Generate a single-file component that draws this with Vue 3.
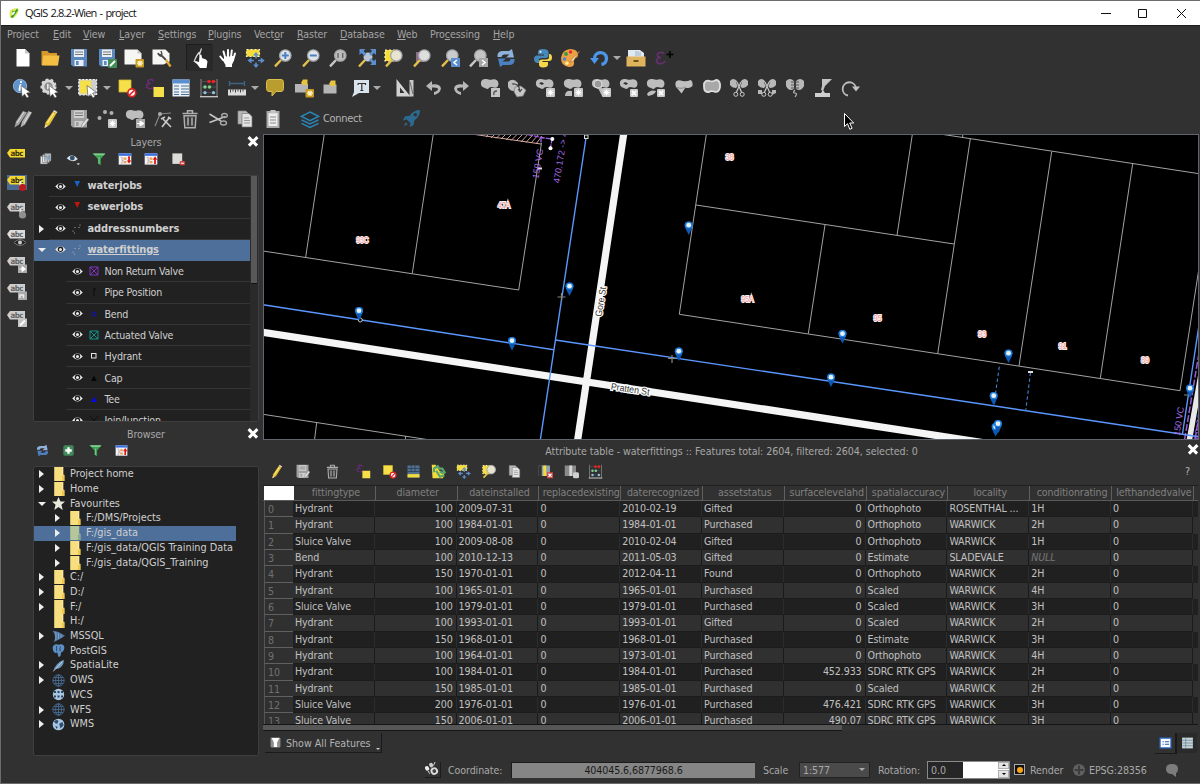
<script setup>
const menus = [
  ['Pro', 'j', 'ect', 46], ['', 'E', 'dit', 30], ['', 'V', 'iew', 36], ['', 'L', 'ayer', 39],
  ['', 'S', 'ettings', 50], ['', 'P', 'lugins', 46], ['Vect', 'o', 'r', 43], ['', 'R', 'aster', 43],
  ['', 'D', 'atabase', 57], ['', 'W', 'eb', 33], ['Pro', 'c', 'essing', 63], ['', 'H', 'elp', 30]
]

const blob = '<path d="M1 4Q2 .5 6.500 1Q10 2.500 13 1.200Q18.500 1 18.500 6Q18 10.500 14 9.500Q11 8.500 9.500 9.500Q8 12 5 10Q0 9 1 4Z" fill="#bdbdbd"/>'
const star = '<rect x="11" y="10" width="9" height="9" rx="1" fill="#c9c9c9"/><path d="M15.500 11.500v6M12.500 14.500h6M13.400 12.400l4.200 4.200M17.600 12.400l-4.200 4.200" stroke="#fff" stroke-width="1.100"/>'
const goldStar = '<rect x="11.500" y="11" width="8.500" height="8.500" rx="1" fill="#c99b22"/><path d="M16 12.500v5.500M13 15.200h6M13.800 13.200l4.200 4.200M18 13.200l-4.200 4.200" stroke="#fff3c0" stroke-width="1.200"/>'
const cross = '<rect x="11" y="11" width="8" height="8" rx="1" fill="#c9c9c9"/><path d="M12.800 12.800l4.400 4.400M17.200 12.800l-4.400 4.400" stroke="#fff" stroke-width="1.700"/>'
const arrowCur = '<path d="M9 7.500l9.500 7-3.900.6 2.300 3.700-2 1.200-2.300-3.800-2.600 2.500Z" fill="#fff" stroke="#444" stroke-width=".6"/>'
const lens = (fill, handle) => `<path d="M8 12L2 18.300" stroke="${handle}" stroke-width="2.400"/><circle cx="12.300" cy="7.500" r="5.700" fill="${fill}" stroke="#a4a7aa" stroke-width="1.300"/>`
const deny = '<circle cx="14.800" cy="14.800" r="3.900" fill="#fff" stroke="#d22" stroke-width="1.700"/><path d="M12.200 17.400l5.200-5.200" stroke="#d22" stroke-width="1.600"/>'
const floppy = (c, l) => `<path d="M2 1h16v17.500H4l-2-2Z" fill="${c}"/><path d="M5 1.500h10v7.500H5Z" fill="${l}"/><path d="M6 4h8M6 6.500h8" stroke="#777" stroke-width="1"/><path d="M5.500 12h9v6h-9Z" fill="${l}"/><path d="M7 13h2.600v4H7Z" fill="${c}"/>`
const fourWay = '<path d="M11 7v11M5.500 12.500h11" stroke="#5b8fcf" stroke-width="1.600" stroke-dasharray="3.500 4"/><path d="M11 4l3 3.500H8ZM11 20l-3-3.500h6ZM2.500 12.500l4-3v6ZM19.700 12.500l-4-3v6Z" fill="#5b8fcf"/>'
const dots = '<path d="M2 1v18M18 1v18" stroke="#888" stroke-width="1"/><path d="M1 18.700h18" stroke="#ccc" stroke-width="1.300"/><path d="M2 3.500h16M2 9h16M2 14.500h16" stroke="#555" stroke-width=".8"/><path d="M10 3.500h.01M14.500 3.500h.01" stroke="#e22" stroke-width="3.600" stroke-linecap="round"/><path d="M6 9h.01M10.500 9h.01" stroke="#7fd08a" stroke-width="3.400" stroke-linecap="round"/><path d="M6 14.700h.01M14.500 14.700h.01" stroke="#8cc3e6" stroke-width="3.200" stroke-linecap="round"/>'
const epsilon = '<path d="M8.500 3.500Q8 1 5.500 1.500Q2.500 2 3 4Q3.300 5.500 6 5.500Q1.500 5.500 1.500 8Q2 11 6 10.600Q8.500 10.500 9.500 8.500" fill="none" stroke="#6b2a78" stroke-width="1.500"/>'
const refresh = '<path d="M1.500 9V7Q2 3 7 3h6l3-2 2 8.500h-8l3.500-3H8Q6 6.500 5.500 9Z" fill="#8fb2dc"/><path d="M18.500 11v2q-.5 4-5.500 4H7l-3 2-2-8.500h8l-3.500 3H12q2 0 2.500-2.500Z" fill="#4c80c0"/>'
const scissorBlob = '<path d="M1 3Q4-1 8 3L9 8 7 10Q3 10 1 7ZM19 3Q16-1 12 3L11 8 13 10Q17 10 19 7Z" fill="#b8b8b8"/><path d="M8 4l4.500 10M12 4L7.500 14" stroke="#444" stroke-width="2.200"/><path d="M8 4l4.500 10M12 4L7.500 14" stroke="#ccc" stroke-width="1.100"/><circle cx="6.800" cy="16.300" r="2" fill="none" stroke="#ccc"/><circle cx="13.200" cy="16.300" r="2" fill="none" stroke="#ccc"/>'
const tag = (c, t) => `<path d="M0 6l3-4h15v8.500H3Z" fill="${c}"/><text x="3.400" y="8.900" font-size="7.800" font-weight="bold" font-family="DejaVu Sans Condensed, DejaVu Sans, sans-serif" textLength="13" fill="${t}">abc</text>`
const treeIcon = d => `<rect x="1" y="2" width="18" height="16" fill="#f4f4f8"/><path d="M1 2h18v3.500H1Z" fill="#3a6fe0"/><path d="M4 8h2v8h-2M6 12h2" stroke="#999" fill="none"/><path d="M8 8h4v3H8ZM8 13h4v3H8Z" fill="#f09a4a"/><path d="${d}" fill="#e01010"/>`
const copyIcon = '<path d="M3 2h8l2 2v11H3Z" fill="#b8b8b8" stroke="#8a8a8a" stroke-width=".7"/><path d="M7 4.500h7l3 3v10.500H7Z" fill="#e4e4e4" stroke="#777" stroke-width=".7"/><path d="M9 9h5M9 11.500h6M9 14h6" stroke="#999"/>'
const trash = '<path d="M2.500 4.500h15M7.500 4V1.700h5v2.300" stroke="#b0b0b0" stroke-width="1.500" fill="none"/><path d="M4 6.700h12l-.8 12H4.800Z" fill="#3b3b3b" stroke="#b0b0b0" stroke-width="1.400"/><path d="M8 8.500v8M12 8.500v8" stroke="#b0b0b0" stroke-width="1.500"/>'

const icons = {
  logo: '<path d="M3 8Q6 1 17 2Q19 8 13 15L8 19Q1 18 3 8Z" fill="#dfe94a"/><path d="M4 17L15 3l2 2-9 13ZM7 6l6 2-5 5Z" fill="#2f9b3a"/><path d="M6 11l4-4 2 2-4 5Z" fill="#fff"/>',
  new: '<path d="M3.500 1h8.500l4.500 4.500v13h-13Z" fill="#fff"/><path d="M12 1v4.500h4.500Z" fill="#c8c8c8"/>',
  open: '<path d="M1.500 17V3h6l1.500 2h8v3h2l-2 9.500Z" fill="#d6982c"/><path d="M2 17.500L3.500 7.500h16l-1.500 10Z" fill="#f4c044"/>',
  save: floppy('#5c88c0', '#e9eef2'),
  saveas: floppy('#5c88c0', '#e9eef2') + '<rect x="11" y="11" width="9" height="9" rx="1" fill="#438d57"/><path d="M13 18l5-5" stroke="#fff" stroke-width="1.800"/>',
  composer: '<path d="M.5 1.500h13l4 4v11H.5Z" fill="#f6f6f4"/><path d="M13.500 1.500v4h4Z" fill="#c6c6c6"/>' + goldStar,
  manager: '<path d="M.5 1.500h13l4 4v8l-6 3H.5Z" fill="#f6f6f4"/><path d="M6 5q1 3 4 3l4 4" fill="none" stroke="#4a4a4a" stroke-width="1.800"/><path d="M9 3l1 3-3 1" fill="none" stroke="#4a4a4a" stroke-width="1.300"/><path d="M14 12l4.500 6.500" stroke="#dca83a" stroke-width="2.400"/>',
  touch: '<path d="M9.500 7q1.200-1 2 0l.5 3 4 1.500 1.500 2-1 6.500H10l-3-4-2.500-2 1-1 3.500 1Z" fill="#fff"/><path d="M11.500.5L9.300 7M9.500 4q-3 3-5.500 10" stroke="#dcdcdc" stroke-width="1.200" fill="none"/>',
  hand: '<path d="M5 12L2.300 8.500M7 9L5.500 3.500M10 9V2M13 9l.8-6.500M15.500 10.500l1.500-5" stroke="#fff" stroke-width="2" stroke-linecap="round"/><path d="M3.500 10l2.500 1V8h9.500l.8 4-2.300 4.500V19H7.500v-2Z" fill="#fff"/><path d="M8.500 4v5M11.600 4v5" stroke="#555" stroke-width=".6"/>',
  panto: '<path d="M1.500 1.500h13v7h-13Z" fill="#f5dd3b" stroke="#fff8b0" stroke-width="1.200" stroke-dasharray="2 2"/>' + fourWay,
  zoomin: lens('#dfe5ea', '#e4c14c') + '<path d="M12.300 4v7M8.800 7.500h7" stroke="#4a80c0" stroke-width="2"/>',
  zoomout: lens('#dfe5ea', '#e4c14c') + '<path d="M8.800 7.500h7" stroke="#4a80c0" stroke-width="2"/>',
  zoom1: lens('#bdbdbd', '#c8c8c8') + '<path d="M10 5v5M14.700 5v5M12.300 6v.1M12.300 9v.1" stroke="#666" stroke-width="1.400"/>',
  zoomfull: '<path d="M8 12L2 18.500" stroke="#e4c14c" stroke-width="2.400"/><circle cx="11" cy="9" r="4.500" fill="#bcc6d2"/><path d="M2.500 1h6l-2 2 3 3-2 2-3-3-2 2ZM19 1h-6l2 2-3 3 2 2 3-3 2 2ZM19 17h-6l2-2-3-3 2-2 3 3 2-2Z" fill="#5b8fcf"/>',
  zoomsel: '<path d="M1 2h9v11H1Z" fill="#f5dd3b" stroke="#fff8b0" stroke-width="1.200" stroke-dasharray="2 2"/>' + lens('#e8e4d0', '#e4c14c'),
  zoomlayer: '<path d="M4 4h8v10H4Z" fill="#8b6b85"/>' + lens('#dedede', '#e4c14c'),
  zoomlast: lens('#c9ccce', '#e4c14c') + '<path d="M11 10h9v9h-9Z" fill="#5b8fcf"/><path d="M17 12l-3 2.500 3 2.500" fill="none" stroke="#fff" stroke-width="1.600"/>',
  zoomnext: lens('#c4c4c4', '#c8c8c8') + '<path d="M11 10h9v9h-9Z" fill="#a6a6a6"/><path d="M14 12l3 2.500-3 2.500" fill="none" stroke="#fff" stroke-width="1.600"/>',
  refresh,
  python: '<path d="M10 1Q5 1 5 4v2.500h6v1H3.500Q1 8 1 11t3 4h2v-3q0-2 3-2h4q2.500 0 2.500-3V4Q15 1 10 1Z" fill="#4788bb"/><path d="M10 19.500q5 0 5-3V14H9.500v-1H16q3 0 3-3.500T16.500 6H16v3q0 2.500-3 2.500H9q-3 0-3 2.500v2.500q0 3 4 3Z" fill="#f6d54a"/><circle cx="7.500" cy="3.800" r="1" fill="#fff"/>',
  palette: '<path d="M10 1Q18 1 18 7q0 3-3 3-2 1-1 4 1 5-5 5Q1 18 1 10 2 2 10 1Z" fill="#eda043"/><circle cx="6" cy="6" r="2" fill="#3a9b43"/><circle cx="10.500" cy="4" r="1.800" fill="#e03030"/><circle cx="4.500" cy="11" r="1.800" fill="#4f86d0"/><circle cx="7" cy="15.200" r="1.700" fill="#fff0a0"/><path d="M19.500 3L12 11l-2 3 3.500-1Z" fill="#f6d9a0" stroke="#a36a20" stroke-width=".5"/>',
  undoBlue: '<path d="M5.500 11A6 6 0 1 1 12.500 16.500" fill="none" stroke="#4c96ea" stroke-width="3.400"/><path d="M1 10h9l-4.500 6Z" fill="#4c96ea"/>',
  archive: '<path d="M2 9V2h12l4 3v4Z" fill="#dfeaf0"/><path d="M10 3v5M12 3v5M14 4v4" stroke="#9db4c2"/><path d="M.5 8.500h19v10h-19Z" fill="#e0b45c"/><path d="M7.500 12h5v2h-5Z" fill="#6d5120"/>',
  epsPlus: '<path d="M10 6Q9 4 6.500 4.500Q3 5 3.500 7.500Q4 9.500 7 9.500Q2.500 9.500 2.500 13Q3 16 7 15.600Q10 15.500 11 13" fill="none" stroke="#63306c" stroke-width="1.800"/><path d="M16 3v7M12.500 6.500h7" stroke="#000" stroke-width="1.500"/>',
  identify: '<circle cx="8" cy="8" r="6.700" fill="#5f93cd" stroke="#9cc0e4" stroke-width=".8"/><path d="M8.500 7l-1 5M9 3.800v.3" stroke="#fff" stroke-width="2" stroke-linecap="round"/>' + arrowCur,
  gear: '<circle cx="8.500" cy="8.500" r="5.600" fill="#8e8e8e" stroke="#d9d9d9" stroke-width="2.600"/><circle cx="8.500" cy="8.500" r="7.300" fill="none" stroke="#d9d9d9" stroke-width="1.500" stroke-dasharray="2.800 2.400"/><path d="M7 5.500l5 3-5 3Z" fill="#e6e6e6"/>' + arrowCur,
  select: '<path d="M.7 1.500h18v15.500H.7Z" fill="#cfcfcf" stroke="#fff" stroke-dasharray="2 1.500"/><path d="M2 2.500h11v13H2Z" fill="#f5e04a"/>' + arrowCur,
  deselect: '<path d="M2 2h12v12H2Z" fill="#f5e04a" stroke="#d8b82c" stroke-width=".8"/>' + deny,
  selexpr: epsilon + '<path d="M8.500 9h10.500v10H8.500Z" fill="#f5e04a"/>',
  table: '<path d="M1.500 1.500h17v17h-17Z" fill="#e9f1f8"/><path d="M1.500 1.500h17v4h-17Z" fill="#5b8fcf"/><path d="M3 8h5M3 11h5M3 14h5M3 16.500h5M10 8h8M10 11h8M10 14h8M10 16.500h8" stroke="#51708f" stroke-width="1.200"/>',
  dots,
  measure: '<path d="M2 5.500h16M2.500 3v5M17.500 3v5" stroke="#3d6687" stroke-width="1.300"/><path d="M1 11.500h18v6H1Z" fill="#dcdcdc"/><path d="M3.500 11.500v3M6 11.500v2M8.500 11.500v3M11 11.500v2M13.500 11.500v3M16 11.500v2" stroke="#444"/>',
  tips: '<path d="M4 1.500h12q2.500 0 2.500 3v6q0 3-2.500 3h-5l-4 4.500v-4.500H4q-2.500 0-2.500-3v-6q0-3 2.500-3Z" fill="#b99d2e" stroke="#d9bf4c" stroke-width="1"/>',
  bookmarkNew: '<path d="M1 6h13v8.500H1Z" fill="#b5b5b5"/><path d="M9 1.500h4.500v5.500H9l-2-2Z" fill="#e8c53c"/>' + goldStar,
  bookmark: '<path d="M3.500 6.500h13v9h-13Z" fill="#b5b5b5"/><path d="M11 2.500h4.500v5.500H11l-2-2Z" fill="#e8c53c"/>',
  annot: '<path d="M4 2h15v13H9l-7 4 2-5Z" fill="#d9e4ec"/><path d="M8 5.500h7.500v1.500M11.800 5.500v7M10.300 12.500h3M8 5.500V7" stroke="#333" stroke-width="1.200" fill="none"/>',
  triangle: '<path d="M1.500 1l14 17.500h-14ZM5 9.500v5.500h4.500Z" fill="#d2d2d2" fill-rule="evenodd"/><path d="M14.500 2h4v16.500h-4" fill="#c8c8c8"/><path d="M15 4l3 12" stroke="#555" stroke-width=".8"/>',
  undo: '<path d="M8 3v3.500q8-1 9 4-1 5-7 6.500v-3q4-1 4-3 0-2-6-1.500V13L2 8Z" fill="#b8b8b8"/>',
  redo: '<path d="M12 3v3.500q-8-1-9 4 1 5 7 6.500v-3q-4-1-4-3 0-2 6-1.500V13l6-5Z" fill="#b8b8b8"/>',
  b1: blob + '<rect x="11" y="10" width="9" height="9" fill="#c4c4c4"/><path d="M14 17q-1-4 3-4" stroke="#555" fill="none" stroke-width="1.400"/>',
  b2: '<path d="M1 4q5-5 10 1l-1 7q-6 3-9-3Z" fill="#bdbdbd"/><path d="M8 9l6-1 5 4-3 6-6 1-3-5Z" fill="#c7c7c7" stroke="#777" stroke-width=".7"/><path d="M5 6q7-1 8 7M11 11l2 2.500 2-2.500" stroke="#444" fill="none" stroke-width="1.200"/>',
  b3: blob + '<path d="M3.500 5q4-3 6 1-3 3-6-1Z" fill="#333" stroke="#ddd" stroke-width=".8"/>' + star,
  b4: blob + '<path d="M2 18q0-6 7-5v5Z" fill="#bdbdbd"/>' + star,
  b5: blob + '<circle cx="7" cy="6" r="4" fill="#999" stroke="#e0e0e0"/><path d="M7 10l4 8V9Z" fill="#bdbdbd"/>' + star,
  b6: blob + '<path d="M3.500 5q4-3 6 1-3 3-6-1Z" fill="#333" stroke="#ddd" stroke-width=".8"/>' + cross,
  b7: blob + '<path d="M1 16q3-5 9-3-1 4-8 5Z" fill="#bdbdbd"/>' + cross,
  b8: '<path d="M1.500 5q1-4 7-2 4 1 8-1 2.500 1 2 6-3 3-7 1.500l-4 6-4-5Q1 9 1.500 5Z" fill="#c0c0c0"/><path d="M3 9.500q6 2 8-1" stroke="#888" fill="none"/>',
  b9: '<path d="M2 5.500q2-4 6-2.500 3 1 6-1 4.500 0 4 7-1 6.500-6 4.500-3-1-5 .5-5 .5-5-5Z" fill="#a8a8a8" stroke="#dedede" stroke-width="1.800"/>',
  cut1: scissorBlob,
  cut2: scissorBlob + '<path d="M1 12h4v4H1ZM15 12h4v3l-4 2Z" fill="#b8b8b8"/>',
  merge: '<path d="M1 3q4-4 8 0v8q-5 3-8-3ZM19 3q-4-4-8 0v8q5 3 8-3Z" fill="#b8b8b8"/><path d="M6 4h8M6 7h8M6 10h8" stroke="#555" fill="none" stroke-width="1.100"/><path d="M10 12q-3 3 0 3t0 4" stroke="#bbb" fill="none" stroke-width="1.100"/>',
  rot: '<path d="M9 1h10l-7 7-2 5-2-1 1-4Z" fill="#c4c4c4"/><path d="M2 15h6l2-3 2 3h5v4H2Z" fill="#cfcfcf"/>',
  circ: '<path d="M8 17.500A6.700 6.700 0 1 1 16 10" fill="none" stroke="#bdbdbd" stroke-width="1.800"/><path d="M12 8.500h8l-4 5Z" fill="#c2c2c2"/>',
  pencils: '<path d="M1.500 18.500l1.500-6L10 2l4 1.500L6 15.500Z" fill="#a3a3a3"/><path d="M7.500 18.500l1.500-6L15.500 2l3.500 1.500-7 12Z" fill="#b0b0b0"/><path d="M4 14L11 3M11 14l6.500-11" stroke="#ddd" stroke-width="1"/>',
  pencil: '<path d="M4.500 19l1-5.500L13 2.500l3.500 2-7 11.500Z" fill="#e6c12f"/><path d="M7.300 14L13.800 4" stroke="#fff0a0" stroke-width="1.200"/><path d="M4.500 19l.8-3.500 2.600 1.600ZM13 2.500L14 1l3.500 2-1 1.500Z" fill="#e9d6c4"/>',
  saveGray: floppy('#a0a0a0', '#cfcfcf') + '<path d="M12 19l1-4 5-6 2 1.500-5 7Z" fill="#ddd" stroke="#666" stroke-width=".5"/>',
  addpt: '<path d="M2.500 9h.01M8 3h.01M14.500 4h.01" stroke="#b0b0b0" stroke-width="4" stroke-linecap="round"/>' + star,
  move: blob + '<path d="M11 10h9v9h-9Z" fill="#aaa"/><path d="M12 14.500h4M15 12l4 2.500-4 2.500Z" stroke="#fff" fill="#fff"/>',
  node: '<path d="M2 17L7 5l11-1" stroke="#888" fill="none" stroke-width="1.200"/><circle cx="7" cy="5" r="2" fill="#aaa"/><path d="M9 18l7-9M10 10l8 8M8 10l4-2M15 8l3 2" stroke="#ccc" stroke-width="1.600"/>',
  trash,
  cut: '<path d="M1.500 5l11.500 7M1.500 13.500l16-6" stroke="#c6c6c6" stroke-width="1.500"/><ellipse cx="15.500" cy="14" rx="3" ry="2" fill="none" stroke="#aaa" stroke-width="1.400"/><ellipse cx="16.500" cy="6.500" rx="2.800" ry="2" fill="none" stroke="#aaa" stroke-width="1.300"/>',
  copy: copyIcon,
  paste: '<path d="M3.500 2h13v17h-13Z" fill="#aaa"/><path d="M5.500 4h9v13h-9Z" fill="#eee"/><path d="M7.500 1h5v3.500h-5Z" fill="#c4c4c4"/><path d="M7 8h6M7 11h6M7 14h6" stroke="#888"/>',
  stack: '<path d="M10 3l8.500 4.300-8.500 4.300-8.500-4.300Z" fill="#2a2f33" stroke="#2a86b8" stroke-width="1.500"/><path d="M1.500 10.800L10 15l8.500-4.200M1.500 14.300L10 18.500l8.500-4.200" fill="none" stroke="#2a86b8" stroke-width="1.500"/>',
  rocket: '<path d="M19 1q-7 0-11 6L3 8 1 12l4-1 4 4-1 4 4-2 1-5q6-4 6-11Z" fill="#2d6a90"/><circle cx="14" cy="6" r="1.800" fill="#303030"/><path d="M4 14l-2 4 4-2Z" fill="#2d6a90"/>',
  lyrStack: '<path d="M2 6h10v11H2ZM5 4h10v11H5ZM8 2h9v11H8Z" fill="#e2e6ea" stroke="#666" stroke-width=".8"/><path d="M10 5v6M14 5v6" stroke="#5c88c0" stroke-width="1.500"/>',
  eyeBlue: '<path d="M1 9q8-9 16 1-8 7-16-1Z" fill="#dfe5ee"/><circle cx="9" cy="8.500" r="3.500" fill="#35516f"/><path d="M15 16h5l-2.500 3Z" fill="#ccc"/>',
  filter: '<path d="M1 2h18l-6.500 8v9l-4-2.500V10Z" fill="#3fa053"/><path d="M1 2h18l-2 2.500H4Z" fill="#7fce8c"/><path d="M10 7v10" stroke="#8fdc9a"/>',
  expand: treeIcon('M14.500 6h2.500v6h2l-3.200 4.500L12.500 12h2Z'),
  collapse: treeIcon('M14.500 17h2.500v-6h2l-3.200-5L12.500 11h2Z'),
  remove: '<path d="M2 2h14v15H2Z" fill="#dcdcd8"/><rect x="12.500" y="13" width="7.500" height="6" rx="1.500" fill="#d84040"/><path d="M14 16h4.500" stroke="#fff" stroke-width="1.500"/>',
  add: '<rect x="2" y="2" width="16" height="16" rx="2.500" fill="#3f8a58"/><path d="M10 5v10M5 10h10" stroke="#fff" stroke-width="3.600"/>',
  lab0: tag('#f2d831', '#3b3410'),
  lab1: tag('#f2d831', '#3b3410') + '<path d="M13.500 7v6" stroke="#f4f4f4" stroke-width="2"/><circle cx="15.500" cy="13.500" r="3.600" fill="#b81c1c"/>',
  lab2: tag('#cdcdcd', '#666') + '<path d="M13.500 7v6" stroke="#ddd" stroke-width="2"/><circle cx="15.500" cy="14" r="3.600" fill="#8f8f8f"/>',
  lab3: tag('#dcdcdc', '#666') + '<path d="M7 14.500q6-6 12 0-6 6-12 0Z" fill="#222" stroke="#777"/><circle cx="13" cy="14.500" r="2" fill="#ccc"/>',
  lab4: tag('#cdcdcd', '#666') + '<path d="M11 9.500h9v8.500h-9Z" fill="#aaa"/><path d="M12.500 14h3M15 11.500l3.500 2.500L15 16.500Z" stroke="#fff" fill="#fff"/>',
  lab5: tag('#cdcdcd', '#666') + '<path d="M11 9.500h9v8.500h-9Z" fill="#aaa"/><path d="M13 16v-3h3.500v3" stroke="#eee" stroke-width="1.400" fill="none"/>',
  lab6: tag('#cdcdcd', '#666') + '<path d="M11 9.500h9v8.500h-9Z" fill="#c4c4c4"/><path d="M13 16.500l5-5" stroke="#fff" stroke-width="1.900"/>',
  eye: '<path d="M.5 10q9.500-12 19 0-9.500 11-19 0Z" fill="#f2f2f2"/><circle cx="10" cy="9.500" r="5" fill="#1b1b1b"/><circle cx="10" cy="10" r="2.800" fill="#e6e6e6"/>',
  triBlue: '<path d="M4-2h13l-6.500 14Z" fill="#1565c8"/>',
  triRed: '<path d="M4-2h13l-6.500 14Z" fill="#c01808"/>',
  points: '<path d="M2 14h.01M6 7h.01M5 18h.01M16 2h.01M14 7h.01" stroke="#bfbfbf" stroke-width="2.400" stroke-linecap="round"/>',
  boxPurple: '<path d="M2 2h16v16H2ZM2 2l16 16M18 2L2 18" fill="none" stroke="#8a35d0" stroke-width="1.800"/>',
  boxTeal: '<path d="M2 2h16v16H2ZM2 2l16 16M18 2L2 18" fill="none" stroke="#12a096" stroke-width="1.800"/>',
  pole: '<path d="M10 2v16M10 4h4" stroke="#050505" stroke-width="1.500"/>',
  ring: '<circle cx="10" cy="10" r="4" fill="none" stroke="#1010c0" stroke-width="2"/>',
  square: '<rect x="5" y="5" width="9" height="9" fill="none" stroke="#e4e4e4" stroke-width="2"/>',
  cap: '<path d="M10 5l5.500 11h-11Z" fill="#050505"/>',
  tee: '<path d="M10 5l5.500 11h-11Z" fill="#0a0ae6"/>',
  join: '<path d="M1 1l9 10 9-10M10 11v9" stroke="#050505" stroke-width="1.500" fill="none"/>',
  folder: '<path d="M2 0h15v11h2v9H2Z" fill="#f7df80"/><path d="M14 13h3V0h-2v13Z" fill="#fbe9a4"/><path d="M15 12h4v8h-4Z" fill="#efc84d"/>',
  folderSel: '<path d="M2 0h15v11h2v9H2Z" fill="#b5c79a"/><path d="M15 12h4v8h-4Z" fill="#8aa791"/>',
  star: '<path d="M10 0l3 7h7l-5.500 5 2 8L10 15.500 3.500 20l2-8L0 7h7Z" fill="#e9e9dc"/>',
  mssql: '<path d="M1 1q10 1 19 8-8 6-18 10 6-8-1-18Z" fill="#5279a6"/><path d="M6 3v13M10 5v9M14 7v5" stroke="#8aaacc" stroke-width="1.200"/>',
  pg: '<path d="M1 5q2-6 9-4 9-2 9 5-1 6-5 7l-1 6-3 1-2-7-3 1Q1 12 1 5Z" fill="#5e8fc4"/><path d="M7 3v8M13 4q-2 4 0 7" stroke="#233f5d" stroke-width="1.300" fill="none"/>',
  feather: '<path d="M2 19Q5 6 18 1q1 7-5 12-4 3-8 2Z" fill="#6f96bd"/><path d="M2 19L16 4" stroke="#d4e2ee" stroke-width="1.200"/>',
  globeLine: '<g fill="none" stroke="#486b92" stroke-width="1.400"><circle cx="10" cy="10" r="8.700"/><path d="M10 1v18M1 10h18M3 5.500h14M3 14.500h14"/><ellipse cx="10" cy="10" rx="4.500" ry="8.700"/></g>',
  globeDots: '<circle cx="10" cy="10" r="8.700" fill="#a9c6e0"/><path d="M3 6h14M3 13h14" stroke="#28435f" stroke-width="3" stroke-dasharray="3 2.500"/>',
  globe: '<circle cx="10" cy="10" r="9" fill="#a7c5e0"/><path d="M3 5q5-4 7 0l-2 4-3-1ZM11 9l5-3 2 5-5 5ZM5 12l4 2-2 3Z" fill="#304e70"/>',
  rowsTop: '<path d="M2 2h16v16H2Z" fill="#53708f"/><path d="M2 6h16M2 10h16M7 2v9M12 2v9" stroke="#263c52"/><path d="M2 13.500h16v4.500H2Z" fill="#f2dc3d"/>',
  invert: '<path d="M1 1h5l6 9 6 2-2 7H2Z" fill="#f2dc3d"/><path d="M4 11V6l5-3 2 3h4l3 5-3 1-3-2M7 9l5 8 6-2" stroke="#5aa56e" stroke-width="3" fill="none"/>',
  delCol: '<path d="M1 2h15v14H1Z" fill="#8da0b0"/><path d="M1 2h4v14H1Z" fill="#333"/><path d="M7 2h4v14H7Z" fill="#f2dc3d"/><rect x="12" y="11" width="8" height="8" fill="#d84848"/><path d="M14 13l4 4M18 13l-4 4" stroke="#fff" stroke-width="1.500"/>',
  newCol: '<path d="M1 2h15v14H1Z" fill="#8a8a8a"/><path d="M7 2h4v14H7Z" fill="#d5d5d5"/><rect x="12" y="11" width="8" height="8" rx="2" fill="#d0d0d0"/>',
  funnelBtn: '<rect x="1" y="1" width="18" height="18" rx="2" fill="#8d8d8d"/><path d="M3 2h14l-4 8v8H7v-8Z" fill="#fff"/>',
  formView: '<path d="M1 2h18v16H1Z" fill="#fff" stroke="#2d6fd0" stroke-width="2"/><path d="M5 8h2M5 12h2M9 8h7M9 12h7" stroke="#2456b0" stroke-width="1.800"/>',
  tableView: '<path d="M1 1h18v18H1Z" fill="#c4d3da"/><path d="M1 5.500h18M7 2v17M2 10h17M2 14.500h17" stroke="#6a8492" stroke-width="1.200"/>',
  tracker: '<g transform="rotate(-30 10 10)"><rect x="2" y="2" width="5" height="6" rx="2" fill="#eee"/><rect x="9" y="1" width="5" height="6" rx="2" fill="#ccc"/><circle cx="11" cy="13" r="5" fill="#ddd"/><circle cx="11" cy="13" r="2.500" fill="#444"/><path d="M4 8v5M14 6l4-3" stroke="#bbb" stroke-width="1.500"/></g>'
}

const spaced = (list, size, start) => {
  let edge = start
  return list.map(([name, centre, kind]) => {
    const w = kind === 'arrow' ? 8 : size
    const gap = centre - w / 2 - edge
    edge = centre + w / 2
    return { name, kind, w, gap }
  })
}
const zip = (names, xs) => names.split(' ').map((n, i) => [n, xs[i], n === 'v' ? 'arrow' : n === 'touch' ? 'pressed' : ''])

const bar1 = spaced(zip('new open save saveas composer manager touch hand panto zoomin zoomout zoom1 zoomfull zoomsel zoomlayer zoomlast zoomnext refresh python palette undoBlue v archive epsPlus',
  [23, 50, 78.500, 107, 134, 162, 200, 227.500, 255, 283, 311, 338, 367, 394, 422, 450, 478, 506, 543, 570, 599, 617, 636, 664]), 20, 0)
const bar2 = spaced(zip('identify gear v select v deselect selexpr table dots measure v tips bookmarkNew bookmark annot v triangle undo redo b1 b2 b3 b4 b5 b6 b7 b8 b9 cut1 cut2 merge rot circ',
  [22, 50, 69, 88, 107, 127, 155, 181, 209, 237, 255, 274.500, 304, 330, 360, 376.500, 405, 434, 461, 490, 517, 545, 573, 601, 629, 656, 684, 712, 739, 767, 795, 822.500, 850]), 20, 0)
const bar3 = spaced(zip('pencils pencil saveGray addpt move node trash cut copy paste stack', [23, 50, 79, 107, 135, 163, 190, 218, 245, 273, 310]), 20, 0)
const layerBar = spaced(zip('lyrStack eyeBlue filter expand collapse remove', [46, 73, 98.500, 125, 151, 178]), 14, 33)
const browserBar = spaced(zip('refresh add filter collapse', [42.500, 68.500, 95, 121]), 13, 33)
const attrBar = spaced(zip('pencil saveGray trash selexpr deselect rowsTop invert panto zoomsel copy delCol newCol dots',
  [276, 302, 332, 363, 389, 413, 438, 463, 489, 514, 545, 571, 595]), 15, 263)

const layers = [
  { n: 'waterjobs', i: 'triBlue', top: true }, { n: 'sewerjobs', i: 'triRed', top: true },
  { n: 'addressnumbers', i: 'points', top: true, state: 'shut' }, { n: 'waterfittings', i: 'points', top: true, state: 'open', sel: true },
  { n: 'Non Return Valve', i: 'boxPurple' }, { n: 'Pipe Position', i: 'pole' }, { n: 'Bend', i: 'ring' },
  { n: 'Actuated Valve', i: 'boxTeal' }, { n: 'Hydrant', i: 'square' }, { n: 'Cap', i: 'cap' }, { n: 'Tee', i: 'tee' },
  { n: 'Join/Junction', i: 'join' }
]
const tree = [
  ['Project home', 'folder', 'shut'], ['Home', 'folder', 'shut'], ['Favourites', 'star', 'open'], ['F:/DMS/Projects', 'folder', 'shut', 1],
  ['F:/gis_data', 'folderSel', 'shut', 1, 1], ['F:/gis_data/QGIS Training Data', 'folder', 'shut', 1], ['F:/gis_data/QGIS_Training', 'folder', 'shut', 1],
  ['C:/', 'folder', 'shut'], ['D:/', 'folder', 'shut'], ['F:/', 'folder', 'shut'], ['H:/', 'folder', ''], ['MSSQL', 'mssql', 'shut'], ['PostGIS', 'pg', ''],
  ['SpatiaLite', 'feather', 'shut'], ['OWS', 'globeLine', 'shut'], ['WCS', 'globeDots', ''], ['WFS', 'globeLine', 'shut'], ['WMS', 'globe', 'shut']
]
const cols = ['fittingtype', 'diameter', 'dateinstalled', 'replacedexisting', 'daterecognized', 'assetstatus', 'surfacelevelahd', 'spatialaccuracy', 'locality', 'conditionrating', 'lefthandedvalve']
const rows = `Hydrant|100|2009-07-31|0|2010-02-19|Gifted|0|Orthophoto|ROSENTHAL ...|1H|0
Hydrant|100|1984-01-01|0|1984-01-01|Purchased|0|Orthophoto|WARWICK|2H|0
Sluice Valve|100|2009-08-08|0|2010-02-04|Gifted|0|Orthophoto|WARWICK|1H|0
Bend|100|2010-12-13|0|2011-05-03|Gifted|0|Estimate|SLADEVALE|NULL|0
Hydrant|150|1970-01-01|0|2012-04-11|Found|0|Orthophoto|WARWICK|2H|0
Hydrant|100|1965-01-01|0|1965-01-01|Purchased|0|Scaled|WARWICK|4H|0
Sluice Valve|100|1979-01-01|0|1979-01-01|Purchased|0|Scaled|WARWICK|3H|0
Hydrant|100|1993-01-01|0|1993-01-01|Gifted|0|Scaled|WARWICK|2H|0
Hydrant|150|1968-01-01|0|1968-01-01|Purchased|0|Estimate|WARWICK|3H|0
Hydrant|100|1964-01-01|0|1973-01-01|Purchased|0|Orthophoto|WARWICK|4H|0
Hydrant|100|1984-01-01|0|1984-01-01|Purchased|452.933|SDRC RTK GPS|WARWICK|2H|0
Hydrant|150|1985-01-01|0|1985-01-01|Purchased|0|Scaled|WARWICK|2H|0
Sluice Valve|200|1976-01-01|0|1976-01-01|Purchased|476.421|SDRC RTK GPS|WARWICK|3H|0
Sluice Valve|150|2006-01-01|0|2006-01-01|Purchased|490.07|SDRC RTK GPS|WARWICK|3H|0`.split('\n').map(r => r.split('|'))

const parcels = [
  'M324.300 134L305.700 257', 'M433.300 134L412.300 273.300', 'M541.500 143L518.700 290', 'M263 251L518.700 290',
  'M706.400 134L679.300 314.300L1180 390.700L1199 268', 'M696 205L954 244', 'M825 225L808.300 333.700', 'M912.400 134L897 235.300',
  'M940 134L1199 173.700', 'M962.700 134V137.500', 'M970.300 139L937.700 353.700', 'M1051.700 151.700L1019 366', 'M1132.700 163.700L1100.300 378.300',
  'M263 414.300L427 439.500', 'M316.700 422.700L314.500 440', 'M405.500 436v4'
].join('')
const pins = [[359, 311], [512, 341], [569.500, 286.500], [688.700, 225.500], [678.800, 351.500], [842.500, 334], [831, 377.500], [1008.500, 353.500], [993.700, 396], [995.600, 427], [998, 424], [1190, 388.500]]
const numbers = [['47A', 504, 205], ['93C', 362.500, 239.500], ['38', 729.500, 156.700], ['95A', 747.500, 298.500], ['95', 877.500, 317.700], ['93', 982, 333.700], ['91', 1062.500, 345.700], ['89', 1145, 359.500]]
</script>

<template>
  <div class="window">
    <header class="title">
      <svg class="logo" viewBox="0 0 20 20" v-html="icons.logo"></svg>
      <span class="caption">QGIS 2.8.2-Wien - project</span>
      <svg class="winbtns" viewBox="0 0 100 24" fill="none" stroke="#111">
        <path d="M4 12.500h10M41.500 8.500h8v8h-8ZM80 8l9 9M89 8l-9 9" />
      </svg>
    </header>
    <nav class="menu">
      <span v-for="m in menus" :key="m[1] + m[2]" :style="{ width: m[3] + 'px' }">{{ m[0] }}<u>{{ m[1] }}</u>{{ m[2] }}</span>
    </nav>

    <div v-for="(bar, bi) in [bar1, bar2, bar3]" :key="bi" class="bar" :class="{ mid: bi === 1 }">
      <span v-for="(t, i) in bar" :key="i" class="tool" :class="t.kind" :style="{ marginLeft: t.gap + 'px', width: t.w + 'px' }">
        <i v-if="t.kind === 'arrow'" class="drop"></i>
        <svg v-else viewBox="0 0 20 20" v-html="icons[t.name]"></svg>
      </span>
      <template v-if="bi === 2">
        <span class="connect">Connect</span>
        <svg class="rocket" viewBox="0 0 20 20" v-html="icons.rocket"></svg>
      </template>
    </div>

    <main class="body">
      <aside class="labels">
        <span v-for="n in 7" :key="n" :class="{ on: n === 2 }"><svg viewBox="0 0 20 20" v-html="icons['lab' + (n - 1)]"></svg></span>
      </aside>

      <section class="side">
        <div class="ptitle layersT"><span>Layers</span><b class="x"></b></div>
        <div class="sbar s1">
          <svg v-for="t in layerBar" :key="t.name" viewBox="0 0 20 20" :style="{ marginLeft: t.gap + 'px', width: t.w + 'px' }" v-html="icons[t.name]"></svg>
        </div>
        <div class="list layerlist">
          <div class="lrows">
            <div v-for="l in layers" :key="l.n" class="lrow" :class="{ top: l.top, sel: l.sel }">
              <i class="tw" :class="l.state"></i>
              <div class="lcell">
                <svg class="eye" viewBox="0 0 20 20" v-html="icons.eye"></svg>
                <svg class="sym" viewBox="0 0 20 20" v-html="icons[l.i]"></svg>
                <span>{{ l.n }}</span>
              </div>
            </div>
          </div>
          <div class="vscroll"><div></div></div>
        </div>
        <div class="ptitle browserT"><span>Browser</span><b class="x"></b></div>
        <div class="sbar s2">
          <svg v-for="t in browserBar" :key="t.name" viewBox="0 0 20 20" :style="{ marginLeft: t.gap + 'px', width: t.w + 'px' }" v-html="icons[t.name]"></svg>
        </div>
        <div class="list browserlist">
          <div v-for="t in tree" :key="t[0]" class="trow" :class="{ sub: t[3], sel: t[4] }">
            <i class="tw" :class="t[2]"></i>
            <svg viewBox="0 0 20 20" preserveAspectRatio="none" :class="{ fold: t[1].startsWith('folder') }" v-html="icons[t[1]]"></svg>
            <span>{{ t[0] }}</span>
          </div>
        </div>
      </section>

      <section class="right">
        <svg class="map" viewBox="263 134 936 306">
          <rect x="263" y="134" width="936" height="306" fill="#000" />
          <path :d="parcels" fill="none" stroke="#a2a2a2" stroke-width="1" />
          <path d="M475 134.500L541 144" stroke="#d8a8a0" />
          <path d="M486 137l4-4M491 138l5-5M496 138.500l6-6M501 139l7-7M506 140l8-8M511 140.500l8-8M516 141l8-8M521 142l8-9M526 142.500l8-9M531 143l8-9M536 144l6-8" stroke="#d8b0a8" stroke-width=".9" />
          <path d="M528 134.500l13 3 11 1.500-1.500 9M541 137.500v6" stroke="#a060e8" stroke-width="1.300" fill="none" stroke-dasharray="5 1" />
          <path d="M263 332.300L992 444M624 132L577.500 441" stroke="#f5f5f5" stroke-width="7.200" />
          <path d="M1203 363L1189 442" stroke="#e8e8e8" stroke-width="5.500" />
          <path d="M1199 353L1184.500 440M1199 415l-4 25" stroke="#9b5ad8" stroke-width="1.500" stroke-dasharray="7 2" />
          <path d="M586.300 136L540.300 440M263 304.700L553.700 349.700M555.300 340L1199 436.700M1199 325L1182.300 435" fill="none" stroke="#5b97ff" stroke-width="1.400" />
          <path d="M999.300 366.700L994 404M1030.500 372.500L1025.700 411" stroke="#3f7fd0" stroke-width="1.100" stroke-dasharray="3.500 2.500" />
          <path d="M1028 372h5M538 168.500h4" stroke="#ddd" stroke-width="1.800" />
          <rect x="584.500" y="135" width="3.500" height="3.500" fill="#111" stroke="#ddd" />
          <circle cx="552.300" cy="139" r="2" fill="#fff" /><circle cx="550.500" cy="148.200" r="2" fill="#fff" />
          <circle cx="360.300" cy="320" r="2" fill="#000" stroke="#ccc" />
          <path d="M557.500 297h8M561.500 293v8M668 358.500h8M672 355v8M1184 395h5" stroke="#85857a" stroke-width="1.200" />
          <g class="purple">
            <text x="0" y="0" transform="translate(538.500 179) rotate(-81)" textLength="30">150 VC</text>
            <text x="0" y="0" transform="translate(559.500 183.500) rotate(-81)" textLength="62">470.172 -&gt; 469</text>
            <text x="0" y="0" transform="translate(1179.500 436) rotate(-81)" textLength="29">150 VC</text>
            <text x="0" y="0" transform="translate(1199 446) rotate(-81)" textLength="32">469.90</text>
          </g>
          <g class="street">
            <text transform="translate(601.500 317) rotate(-81)" textLength="30" lengthAdjust="spacingAndGlyphs">Gore St</text>
            <text transform="translate(610.500 389.500) rotate(8.500)" textLength="39" lengthAdjust="spacingAndGlyphs">Pratten St</text>
          </g>
          <g class="num">
            <text v-for="n in numbers" :key="n[0]" :x="n[1]" :y="n[2] + 3.2" :textLength="n[0].length * 4.1" lengthAdjust="spacingAndGlyphs">{{ n[0] }}</text>
          </g>
          <g v-for="p in pins" :key="p[0]" :transform="`translate(${p[0]} ${p[1]})`">
            <path d="M-4 0A4 4 0 1 1 4 0Q3 4.500 0 9.500Q-3 4.500-4 0Z" fill="#0c58b4" />
            <path d="M-4 0A4 4 0 0 1 4 0L3 3H-3Z" fill="#1b7ddc" />
            <circle cy="-.3" r="2.400" fill="#e8f0f4" />
          </g>
          <rect x="263.500" y="134.500" width="935" height="305" fill="none" stroke="#60656d" />
        </svg>

        <div class="ptitle attrT"><span>Attribute table - waterfittings :: Features total: 2604, filtered: 2604, selected: 0</span><b class="x"></b></div>
        <div class="sbar attrbar">
          <svg v-for="t in attrBar" :key="t.name" viewBox="0 0 20 20" :style="{ marginLeft: t.gap + 'px', width: t.w + 'px' }" v-html="icons[t.name]"></svg>
          <span class="help">?</span>
        </div>
        <div class="grid">
          <div class="ghead"><i></i><span v-for="c in cols" :key="c">{{ c }}</span></div>
          <div class="gbody">
            <div v-for="(r, i) in rows" :key="i" class="grow">
              <i>{{ i }}</i>
              <span v-for="(c, j) in r" :key="j" :class="{ num: j === 1 || j === 6, nul: c === 'NULL' }">{{ c }}</span>
            </div>
          </div>
          <div class="hscroll"><div></div></div>
        </div>
        <div class="foot">
          <div class="showall"><svg viewBox="0 0 20 20" v-html="icons.funnelBtn"></svg><span>Show All Features</span><i class="tiny"></i></div>
          <div class="views">
            <span><svg viewBox="0 0 20 20" v-html="icons.formView"></svg></span>
            <span class="down"><svg viewBox="0 0 20 20" v-html="icons.tableView"></svg></span>
          </div>
        </div>
      </section>
    </main>

    <footer class="status">
      <span class="track"><svg viewBox="0 0 20 20" v-html="icons.tracker"></svg></span>
      <span class="coordL">Coordinate:</span>
      <span class="coord">404045.6,6877968.6</span>
      <span class="scaleL">Scale</span>
      <span class="combo">1:577<i class="drop"></i></span>
      <span class="rotL">Rotation:</span>
      <span class="spin"><em>0.0</em><span class="steps"><i class="up"></i><i class="dn"></i></span></span>
      <span class="check"><i></i></span>
      <span class="render">Render</span>
      <svg class="crs" viewBox="0 0 12 12"><circle cx="6" cy="6" r="6" fill="#606060" /><path d="M6 1.500v9M1.500 6h9" stroke="#3d3d3d" stroke-width="2" /></svg>
      <span class="epsg">EPSG:28356</span>
      <svg class="bubble" viewBox="0 0 14 14"><path d="M7 1q6 0 6 5 0 3-2 4v4l-4-3Q1 11 1 6q0-5 6-5Z" fill="#7c7c7c" /></svg>
    </footer>
    <svg class="cursor" viewBox="0 0 10 17"><path d="M.5.500v13l3-2.800 2.300 5.600 2.300-1-2.400-5.300h4Z" fill="#000" stroke="#fff" stroke-width="1" /></svg>
  </div>
</template>

<style>
body { margin: 0; overflow: hidden; background: #313131; }
</style>
<style scoped>
.window { position: relative; box-sizing: border-box; width: 1200px; height: 784px; display: flex; flex-direction: column; background: #313131; border: solid #6f6b6c; border-width: 1px 0 1px 1px; color: #b4b4b4; font: 10.600px/14px "DejaVu Sans Condensed", "DejaVu Sans", sans-serif; letter-spacing: -.1px; white-space: nowrap; overflow: hidden; }
svg { display: block; flex: none; }
.title { height: 25px; box-sizing: border-box; flex: none; background: #fff; display: flex; align-items: center; border-bottom: 1px solid #1d1d1d; }
.logo { width: 12px; height: 12px; margin-left: 7px; }
.caption { margin: 0 0 2px 5px; color: #111; font: 11px "Open Sans", "Noto Sans", sans-serif; letter-spacing: -.8px; word-spacing: 1px; }
.winbtns { width: 100px; height: 24px; margin-left: auto; margin-right: 3px; }
.menu { display: flex; height: 16px; flex: none; align-items: center; padding-left: 6px; color: #a4a4a4; }
.menu span { flex: none; margin-top: -1px; }
.menu u { text-underline-offset: 1px; }
.bar { display: flex; height: 31px; flex: none; align-items: center; margin-left: -1px; }
.bar.mid { height: 30px; }
.tool { flex: none; height: 20px; }
.tool svg { width: 20px; height: 20px; }
.pressed { background: #292929; box-shadow: 0 0 0 3px #292929, -1px -1px 0 3px #1d1d1d; }
.drop { display: block; width: 0; height: 0; border: 4px solid transparent; border-top-color: #aaa; border-bottom: 0; margin-top: 8px; }
.connect { margin-left: 3px; font-size: 11px; letter-spacing: -.3px; }
.rocket { width: 19px; height: 19px; margin-left: 40px; }
.body { display: flex; flex: 1; min-height: 0; }
.labels { width: 32px; flex: none; display: flex; flex-direction: column; padding: 14px 0 0 6px; box-sizing: border-box; gap: 12px; }
.labels span { width: 20px; height: 15px; }
.labels .on { background: #4d6b92; }
.labels svg { width: 20px; height: 20px; margin-top: -1px; }
.side { width: 226px; flex: none; display: flex; flex-direction: column; margin-right: 4px; }
.ptitle { display: flex; flex: none; align-items: center; height: 16px; position: relative; color: #a8a8a8; }
.ptitle span { flex: 1; text-align: center; margin-top: -1px; }
.x { position: absolute; right: 1px; top: 2px; width: 10px; height: 10px; }
.x::before, .x::after { content: ""; position: absolute; left: -1px; top: 4px; width: 12px; height: 2.500px; background: #fff; transform: rotate(45deg); }
.x::after { transform: rotate(-45deg); }
.sbar { display: flex; align-items: center; flex: none; box-sizing: border-box; }
.s1 { height: 25px; padding-bottom: 7px; }
.s1 svg { height: 14px; }
.s2 { height: 24px; padding-bottom: 8px; }
.s2 svg { height: 13px; }
.list { box-sizing: border-box; border: 1px solid #3e3e3e; border-radius: 2px; background: #212121; color: #cfcfcf; overflow: hidden; flex: none; }
.layerlist { height: 247px; display: flex; }
.lrows { width: 216px; flex: none; }
.lrow { display: flex; height: 21.280px; align-items: stretch; }
.tw { width: 15px; display: flex; flex: none; align-items: center; justify-content: center; }
.tw.shut::before { content: ""; border: 4px solid transparent; border-left: 5px solid #eee; border-right: 0; }
.tw.open::before { content: ""; border: 4px solid transparent; border-top: 4px solid #eee; border-bottom: 0; }
.lcell { flex: 1; display: flex; align-items: center; box-sizing: border-box; border-bottom: 1.500px solid #363636; margin-left: 17px; letter-spacing: -.2px; }
.top .lcell { margin-left: 0; font-weight: bold; font-size: 11px; letter-spacing: -.1px; }
.eye { width: 11px; height: 11px; margin: 0 6px 0 5.500px; }
.sym { width: 10px; height: 10px; margin-right: 6px; }
.lrow.sel { background: #4d6f9a; }
.lrow.sel .lcell { border-color: #4d6f9a; }
.lrow.sel span { text-decoration: underline; }
.vscroll { margin-left: auto; width: 8px; background: #2a2a2a; }
.vscroll div { width: 6px; height: 107px; margin-left: 1px; background: #585858; border-bottom: 1px solid #111; }
.browserT { margin-top: 4px; }
.browserlist { height: 290px; font-size: 10.800px; letter-spacing: 0; }
.trow { display: flex; height: 14.710px; align-items: center; }
.trow svg { width: 13px; height: 13px; margin: 0 5px 0 3px; }
.trow svg.fold { width: 12px; height: 14px; margin-left: 4px; }
.sub { padding-left: 16px; }
.trow.sel { background: #4d6f9a; width: 186px; }
.right { flex: 1; display: flex; flex-direction: column; min-width: 0; }
.map { width: 936px; height: 306px; flex: none; }
.purple text { font: 9px "Liberation Sans", sans-serif; fill: #a56be0; }
.street text { font: 9.500px "Liberation Sans", sans-serif; fill: #333; stroke: #fff; stroke-width: 2.500px; paint-order: stroke; letter-spacing: 0; }
.num text { font: 8.500px "Liberation Sans", sans-serif; fill: #ee9c9c; stroke: #fff0f0; stroke-width: 2px; paint-order: stroke; text-anchor: middle; letter-spacing: 0; }
.attrT { margin-top: 3px; letter-spacing: -.05px; }
.attrT .x { right: 2px; top: 1px; }
.attrbar { height: 26px; padding-bottom: 2px; }
.attrbar svg { height: 15px; }
.help { margin-left: auto; margin-right: 10px; }
.grid { display: flex; flex-direction: column; flex: none; height: 246px; border-top: 1px solid #202020; margin-right: 2px; box-sizing: border-box; }
.ghead { display: flex; height: 15px; box-sizing: border-box; flex: none; color: #808080; border-bottom: 1px solid #5a5a5a; line-height: 13px; }
.ghead i { width: 31px; border-left: 1px solid #313131; box-sizing: border-box; background: #fff; flex: none; }
.ghead span { width: 81.800px; flex: none; box-sizing: border-box; border-right: 1px solid #606060; text-align: center; padding-left: 3px; overflow: hidden; }
.gbody { height: 223px; overflow: hidden; color: #c0c0c0; margin-left: 1px; }
.grow { display: flex; height: 16.350px; background: #202020; }
.grow:nth-child(even) { background: #303030; }
.grow i { width: 29px; flex: none; box-sizing: border-box; background: #303030; border-bottom: 1px solid #606060; border-left: 1px solid #555; font-style: normal; color: #707070; padding: 1px 0 0 3px; }
.grow span { width: 81.800px; flex: none; box-sizing: border-box; padding: 0 3px 0 2px; border-right: 1px solid #1a1a1a; border-bottom: 1px solid #1c1c1c; }
.grow:nth-child(odd) span { border-right-color: #2c2c2c; }
.grow .num { text-align: right; }
.grow .nul { font-style: italic; color: #777; }
.hscroll { height: 7px; background: #333; border-top: 1px solid #151515; box-sizing: border-box; flex: none; }
.hscroll div { width: 579px; height: 5px; background: #565656; border-bottom: 1px solid #151515; }
.foot { display: flex; justify-content: space-between; margin-top: 2px; }
.showall { display: flex; align-items: center; width: 117px; height: 20px; box-sizing: border-box; margin-left: 2px; padding-left: 5px; border: solid #1a1a1a; border-width: 0 1px 1px 0; position: relative; letter-spacing: 0; }
.showall svg { width: 11px; height: 11px; margin-right: 5px; }
.tiny { position: absolute; right: 1px; bottom: 2px; border: 2.500px solid transparent; border-top-color: #ccc; border-bottom: 0; }
.views { display: flex; margin-right: 3px; }
.views span { width: 20px; height: 20px; border-right: 2px solid #1a1a1a; border-bottom: 1px solid #1a1a1a; display: flex; align-items: center; justify-content: center; }
.views .down { background: #2a2a2a; border: 0; }
.views svg { width: 13px; height: 12px; }
.status { display: flex; align-items: center; height: 27px; flex: none; color: #a8a8a8; }
.track { margin-left: 424px; width: 16px; height: 16px; border: solid #1c1c1c; border-width: 0 1px 1px 0; flex: none; box-sizing: border-box; }
.track svg { width: 15px; height: 15px; }
.coordL { margin-left: 7px; width: 63px; }
.coord { width: 244px; height: 16px; background: #858585; color: #1a1a1a; text-align: center; line-height: 14px; flex: none; border: solid #1b1b1b; border-width: 1px 0 0 1px; box-sizing: border-box; }
.scaleL { width: 36px; margin-left: 8px; flex: none; }
.combo { width: 71px; height: 16px; box-sizing: border-box; background: #4a4a4a; border: 1px solid #222; padding: 0 4px 0 3px; display: flex; justify-content: space-between; flex: none; }
.combo .drop { margin-top: 5px; border-width: 3px 3px 0; }
.rotL { margin-left: 8px; width: 49px; flex: none; }
.spin { width: 83px; height: 18px; box-sizing: border-box; border: 1px solid #8a8a8a; background: #fff; display: flex; flex: none; }
.spin em { width: 35px; background: #262626; padding-left: 3px; box-sizing: border-box; font-style: normal; line-height: 16px; }
.steps { margin-left: auto; width: 11px; display: flex; flex-direction: column; gap: 1px; }
.steps i { flex: 1; background: #e4e4e4; border: 1px solid #b0b0b0; display: flex; align-items: center; justify-content: center; }
.steps i::before { content: ""; border: 2.500px solid transparent; border-bottom-color: #000; border-top: 0; }
.steps .dn::before { border: 2.500px solid transparent; border-top-color: #000; border-bottom: 0; }
.check { width: 11px; height: 11px; box-sizing: border-box; border: 1px solid #aaa; background: #111; margin-left: 4px; display: flex; align-items: center; justify-content: center; flex: none; }
.check i { width: 6px; height: 6px; border-radius: 3px; background: #ffa414; }
.render { margin-left: 5px; width: 43px; flex: none; }
.crs { width: 12px; height: 12px; }
.epsg { margin-left: 4px; width: 76px; flex: none; }
.bubble { width: 14px; height: 14px; }
.cursor { position: absolute; left: 843px; top: 112px; width: 10px; height: 17px; }
</style>
